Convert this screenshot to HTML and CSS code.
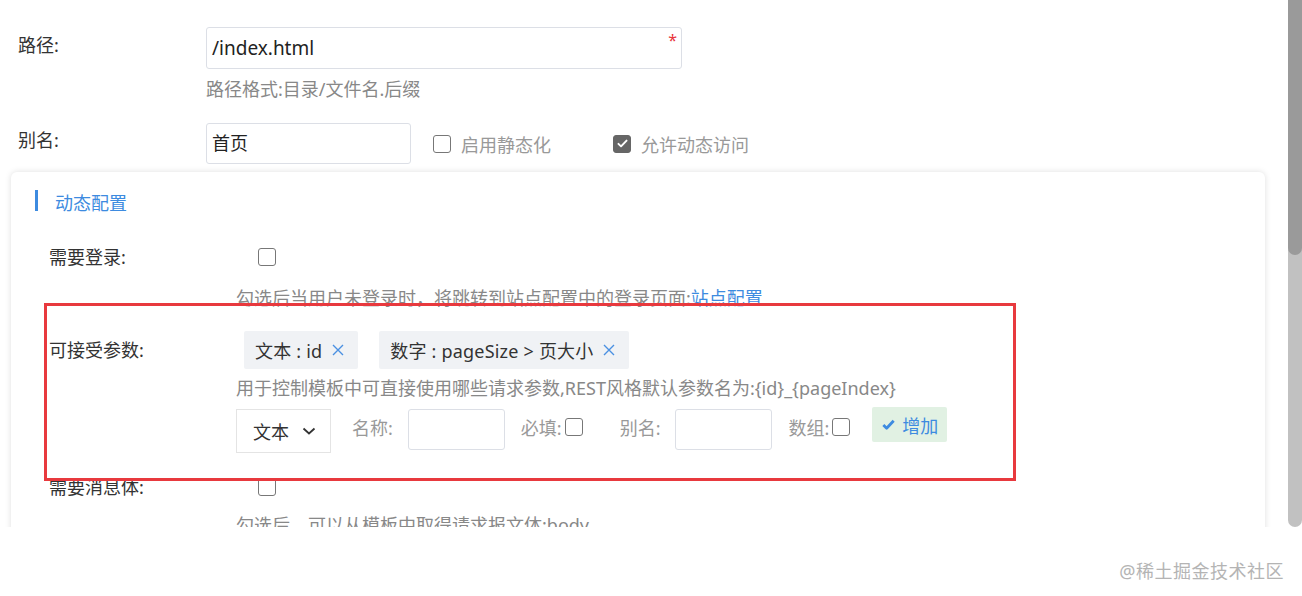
FILE: index.html
```html
<!DOCTYPE html>
<html lang="zh-CN">
<head>
	<meta charset="UTF-8">
	<title>页面配置</title>
	<link rel="stylesheet" href="styles.css">
</head>
<body>
	<div class="viewport">
		<div class="page">
			<!-- 基本信息 -->
			<div class="row row-path">
				<label class="label">路径:</label>
				<div class="field">
					<div class="input input-path">/index.html<span class="required">*</span></div>
					<div class="hint">路径格式:目录/文件名.后缀</div>
				</div>
			</div>
			<div class="row row-alias">
				<label class="label">别名:</label>
				<div class="field inline">
					<div class="input input-alias">首页</div>
					<span class="cb cb-static"></span><span class="cb-text">启用静态化</span>
					<span class="cb checked cb-dynamic"><svg viewBox="0 0 16 16" width="13" height="13"><path d="M3 8.5l3.2 3L13 4.5" fill="none" stroke="#fff" stroke-width="2.4" stroke-linecap="round" stroke-linejoin="round"/></svg></span><span class="cb-text">允许动态访问</span>
				</div>
			</div>

			<!-- 动态配置 -->
			<div class="card">
				<div class="card-title"><i class="bar"></i>动态配置</div>
				<div class="card-body">
					<div class="crow crow-login">
						<label class="label">需要登录:</label>
						<div class="field"><span class="cb cb-row"></span></div>
					</div>
					<div class="chint chint-login">勾选后当用户未登录时，将跳转到站点配置中的登录页面:<a class="link">站点配置</a></div>

					<div class="crow crow-params">
						<label class="label">可接受参数:</label>
						<div class="field tags">
							<span class="tag">文本 : id<svg class="close" viewBox="0 0 12 12" width="12" height="12"><path d="M1 1l10 10M11 1L1 11" stroke="#4a90e2" stroke-width="1.4"/></svg></span>
							<span class="tag">数字 : pageSize &gt; 页大小<svg class="close" viewBox="0 0 12 12" width="12" height="12"><path d="M1 1l10 10M11 1L1 11" stroke="#4a90e2" stroke-width="1.4"/></svg></span>
						</div>
					</div>
					<div class="chint chint-params">用于控制模板中可直接使用哪些请求参数,REST风格默认参数名为:{id}_{pageIndex}</div>
					<div class="controls">
						<div class="select">文本<svg viewBox="0 0 16 16" width="16" height="16"><path d="M2.5 5.5l5.5 5 5.5-5" fill="none" stroke="#333" stroke-width="1.8"/></svg></div>
						<span class="ctl-label ml-name">名称:</span>
						<div class="input input-small"></div>
						<span class="ctl-label ml-req">必填:</span><span class="cb cb-ctl"></span>
						<span class="ctl-label ml-alias">别名:</span>
						<div class="input input-small"></div>
						<span class="ctl-label ml-arr">数组:</span><span class="cb cb-ctl"></span>
						<button class="btn-add"><svg viewBox="0 0 16 16" width="15" height="15"><path d="M2.5 8.5l3.5 3.5 7.5-8" fill="none" stroke="#3d8be0" stroke-width="3" stroke-linejoin="round"/></svg>增加</button>
					</div>

					<div class="crow crow-body">
						<label class="label">需要消息体:</label>
						<div class="field"><span class="cb cb-row"></span></div>
					</div>
					<div class="chint chint-body">勾选后，可以从模板中取得请求报文体:body</div>
				</div>
			</div>

			<!-- 标注框 -->
			<div class="mark"></div>
		</div>
		<div class="scrollbar"><div class="thumb"></div></div>
	</div>
	<div class="footer">@稀土掘金技术社区</div>
</body>
</html>
```

FILE: styles.css
```css
*{margin:0;padding:0;box-sizing:border-box;}
body{font-family:"Noto Sans","Noto Sans CJK SC",sans-serif;font-size:18px;color:#333;background:#fff;}

/*外框*/
.viewport{height:527px;display:flex;}
.page{flex:1;position:relative;overflow:hidden;background:#fff;padding:27px 23px 0 0;}
.scrollbar{width:14px;background:#c1c1c1;border-radius:0 0 7px 7px;}
.scrollbar .thumb{height:255px;background:#9a9a9a;border-radius:0 0 7px 7px;}
.footer{height:69px;text-align:right;padding:30px 18px 0 0;color:#b4b4b4;font-size:18px;letter-spacing:0.5px;}

/*表单行*/
.row{display:grid;grid-template-columns:188px 1fr;padding-left:18px;}
.label{line-height:24px;color:#333;white-space:nowrap;}
.row-path .label{padding-top:6px;}
.row-alias{margin-top:22px;}
.row-alias .label{padding-top:5px;}
.inline{display:flex;align-items:center;}

.input{border:1px solid #dcdfe6;border-radius:3px;background:#fff;color:#222;}
.input-path{position:relative;width:476px;height:42px;line-height:40px;padding-left:5px;font-size:19px;}
.required{position:absolute;right:4px;top:-8px;color:#e8343a;font-size:16px;}
.input-alias{width:205px;height:41px;line-height:39px;padding-left:5px;}
.hint{margin-top:8px;line-height:24px;color:#888;}

/*复选框*/
.cb{display:inline-flex;align-items:center;justify-content:center;width:18px;height:18px;border:1.5px solid #777;border-radius:3px;background:#fff;flex:none;}
.cb.checked{background:#666;border-color:#666;}
.cb-text{color:#999;margin-left:10px;}
.cb-static{margin-left:22px;}
.cb-dynamic{margin-left:62px;}

/*卡片*/
.card{margin:8px 0 0 11px;height:400px;border-radius:6px;box-shadow:0 0 6px rgba(0,0,0,.13);padding:18px 24px 0;}
.card-title{display:flex;align-items:flex-start;color:#3d8be0;line-height:26px;}
.card-title .bar{display:block;width:3px;height:21px;background:#3d8be0;margin-right:17px;}
.card-body{padding-left:14px;}

.crow{display:grid;grid-template-columns:187px 1fr;}
.crow .label{line-height:34px;}
.crow .field{display:flex;align-items:center;}
.cb-row{margin-left:22px;}
.crow-login{margin-top:24px;}
.crow-params{margin-top:21px;}
.crow-params .label{line-height:38px;}
.crow-body{margin-top:17px;}

.chint{margin-left:187px;line-height:24px;color:#888;white-space:nowrap;}
.chint-login{margin-top:12px;}
.chint-params{margin-top:7px;}
.chint-body{margin-top:9px;}
.link{color:#3d8be0;}

/*参数标签*/
.tags{gap:21px;}
.tag{margin-left:8px;height:38px;display:flex;align-items:center;padding:0 14px 0 11px;background:#f0f2f5;border-radius:2px;color:#333;white-space:nowrap;letter-spacing:0.2px;}
.tag + .tag{margin-left:0;}
.tag .close{margin-left:10px;}

/*添加参数*/
.controls{display:flex;align-items:flex-start;margin:9px 0 0 187px;}
.select{width:95px;height:44px;border:1px solid #e4e4e4;display:flex;align-items:center;padding-left:16px;gap:12px;color:#333;}
.ctl-label{color:#999;line-height:24px;padding-top:7px;}
.input-small{width:97px;height:41px;margin-left:15px;}
.ml-name{margin-left:21px;}
.ml-req{margin-left:16px;}
.ml-alias{margin-left:37px;}
.ml-arr{margin-left:16px;}
.cb-ctl{margin:9px 0 0 3px;}
.btn-add{margin:-2px 0 0 22px;height:35px;padding:0 9px;border:none;border-radius:2px;background:#e1f1e3;color:#3d8be0;font:inherit;display:flex;align-items:center;gap:6px;}

/*红色标注*/
.mark{position:absolute;left:44px;top:303px;width:972px;height:178px;border:3px solid #e8393e;}
```
